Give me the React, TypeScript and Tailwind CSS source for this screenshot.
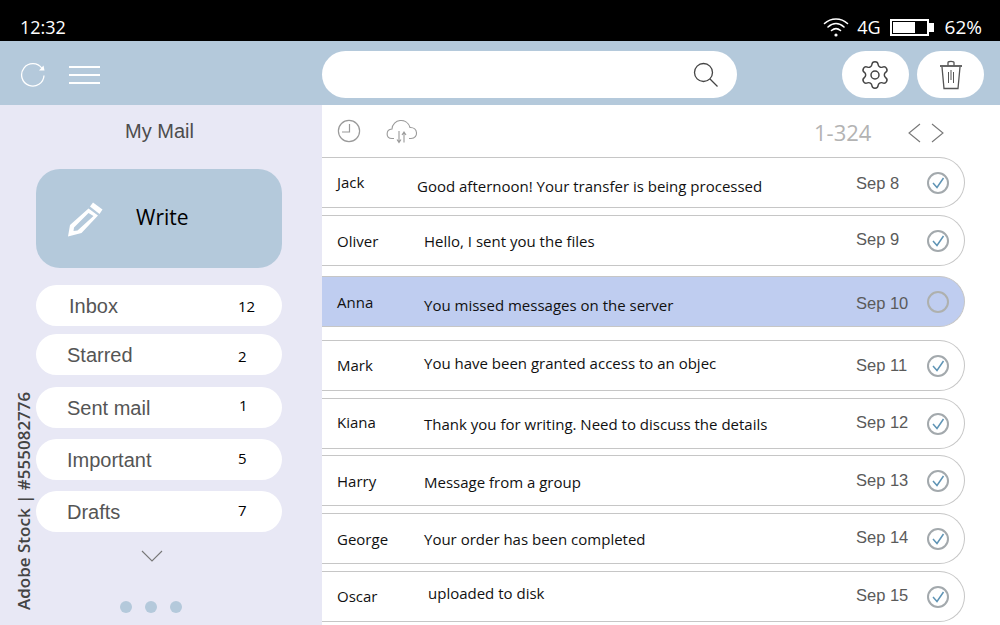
import { Settings } from "lucide-react";

const folders = [
  { name: "Inbox", count: "12", box: "mt-[17px]", label: "ml-[33px] w-[169px]", num: "mt-[2px]" },
  { name: "Starred", count: "2", box: "mt-[8px]", label: "ml-[31px] w-[171px]", num: "mt-[4px]" },
  { name: "Sent mail", count: "1", box: "mt-[12px]", label: "ml-[31px] w-[172px]", num: "mb-[4px]" },
  { name: "Important", count: "5", box: "mt-[11px]", label: "ml-[31px] w-[171px]", num: "mb-[2px]" },
  { name: "Drafts", count: "7", box: "mt-[11px]", label: "ml-[31px] w-[171px]", num: "mb-[2px]" },
];

const mails = [
  { name: "Jack", subject: "Good afternoon! Your transfer is being processed", date: "Sep 8", box: "mt-0", nameCls: "", subCls: "ml-[80px] mt-[8px]", dateCls: "mt-[2px]" },
  { name: "Oliver", subject: "Hello, I sent you the files", date: "Sep 9", box: "mt-[7px]", nameCls: "mt-[2px]", subCls: "ml-[87px] mt-[2px]", dateCls: "mb-[2px]" },
  { name: "Anna", subject: "You missed messages on the server", date: "Sep 10", box: "mt-[10px]", nameCls: "mt-[1px]", subCls: "ml-[87px] mt-[7px]", dateCls: "mt-[3px]", active: true },
  { name: "Mark", subject: "You have been granted access to an objec", date: "Sep 11", box: "mt-[13px]", nameCls: "", subCls: "ml-[87px] mb-[4px]", dateCls: "" },
  { name: "Kiana", subject: "Thank you for writing. Need to discuss the details", date: "Sep 12", box: "mt-[7px]", nameCls: "mb-[2px]", subCls: "ml-[87px] mt-[2px]", dateCls: "mb-[2px]" },
  { name: "Harry", subject: "Message from a group", date: "Sep 13", box: "mt-[6px]", nameCls: "mt-[1px]", subCls: "ml-[87px] mt-[3px]", dateCls: "mb-[1px]" },
  { name: "George", subject: "Your order has been completed", date: "Sep 14", box: "mt-[7px]", nameCls: "mt-[1px]", subCls: "ml-[87px] mt-[1px]", dateCls: "mb-[3px]" },
  { name: "Oscar", subject: "uploaded to disk", date: "Sep 15", box: "mt-[7px]", nameCls: "", subCls: "ml-[91px] mb-[7px]", dateCls: "mb-[3px]" },
];

function Wifi() {
  return (
    <svg width="26" height="22" viewBox="0 0 26 22" fill="none" stroke="white" strokeWidth="1.6" strokeLinecap="round">
      <path d="M1.5 7.5C8 1.5 18 1.5 24.5 7.5" />
      <path d="M5 11C10 6.5 16 6.5 21 11" />
      <path d="M8.5 14.5C11.5 12 14.5 12 17.5 14.5" />
      <circle cx="13" cy="19" r="1.6" fill="white" stroke="none" />
    </svg>
  );
}

function Battery() {
  return (
    <div className="flex items-center">
      <div className="h-[17px] w-[39px] border-2 border-white p-[1px]">
        <div className="h-full w-[22px] bg-white" />
      </div>
      <div className="h-[9px] w-[5px] bg-white" />
    </div>
  );
}

function Refresh() {
  return (
    <svg width="26" height="26" viewBox="0 0 26 26" fill="none" stroke="white" strokeWidth="1.3">
      <path d="M22 6.5A11.2 11.2 0 1 0 24 13.5" />
      <path d="M19 8.5L24.5 8.5L23.5 3.5Z" fill="white" stroke="none" />
    </svg>
  );
}

function Pencil() {
  return (
    <svg width="36" height="36" viewBox="0 0 36 36" fill="white">
      <path d="M26 1.5L35.5 8.5L32.5 13L23 5.5Z" />
      <path fillRule="evenodd" d="M21.5 7.5L31 14.5L14.5 32L1 35.5L3 24ZM21.5 12L7 26.5L6.5 30L10.5 29.5L26.5 15Z" />
      <path d="M21.8 13.5L24.8 15.8L11.5 27.5L9 25.5Z" fill="#b4c9db" />
    </svg>
  );
}

function Trash() {
  return (
    <svg width="24" height="32" viewBox="0 0 24 32" fill="none" stroke="#555" strokeWidth="1.3">
      <path d="M1 7H23" strokeWidth="1.8" />
      <path d="M9 6.5V3.5C9 2 15 2 15 3.5V6.5" />
      <path d="M3 8L5 29.5H19L21 8" />
      <path d="M9.5 13V24M12 11V21M14.5 13V24" strokeWidth="1" />
    </svg>
  );
}

function Clock() {
  return (
    <svg width="24" height="24" viewBox="0 0 24 24" fill="none" stroke="#9a9a9a" strokeWidth="1.2">
      <circle cx="12" cy="12" r="10.6" />
      <path d="M12.5 5V13H5" />
    </svg>
  );
}

function Cloud() {
  return (
    <svg width="32" height="26" viewBox="0 0 32 26" fill="none" stroke="#9a9a9a" strokeWidth="1.1">
      <path d="M8 20.5H6C-0.5 20.5 -0.5 11.5 6 11C6.5 1 21 -1 24 9.5C32 9 33 20.5 25 20.5H23" />
      <path d="M13 13V24M11 21.5L13 24.5L15 21.5M18 24.5V14M16 17L18 14L20 17" />
    </svg>
  );
}

function Chevron({ d, w = 14, h = 20 }: { d: string; w?: number; h?: number }) {
  return (
    <svg width={w} height={h} viewBox={`0 0 ${w} ${h}`} fill="none" stroke="#777" strokeWidth="1.1">
      <path d={d} />
    </svg>
  );
}

function CheckMark({ active }: { active?: boolean }) {
  if (active) {
    return <div className="h-[22px] w-[22px] rounded-full border-2 border-[#aeb0ad]" />;
  }
  return (
    <div className="flex h-[22px] w-[22px] items-center justify-center rounded-full border-2 border-[#a3a9ad]">
      <svg width="14" height="12" viewBox="0 0 14 12" fill="none" stroke="#5f94b5" strokeWidth="1.5">
        <path d="M2 6L6 10.5L12.5 1" />
      </svg>
    </div>
  );
}

export default function App() {
  return (
    <div className="relative flex h-[625px] w-[1000px] flex-col overflow-hidden bg-white font-['Open_Sans',sans-serif]">
      <div className="flex h-[41px] items-end justify-between bg-black pb-[1px] pl-5 pr-[18px] text-white">
        <span className="text-[18px] leading-[26px]">12:32</span>
        <div className="flex items-center">
          <Wifi />
          <span className="ml-[8px] text-[18px] leading-[26px]">4G</span>
          <div className="ml-[9px]">
            <Battery />
          </div>
          <span className="ml-[11px] text-[19px] leading-[26px]">62%</span>
        </div>
      </div>

      <div className="flex h-16 items-center bg-[#b4c9db] pl-[20px] pt-[3px]">
        <Refresh />
        <div className="ml-[23px] flex w-[31px] flex-col gap-[6px]">
          <div className="h-[2px] bg-white" />
          <div className="h-[2px] bg-white" />
          <div className="h-[2px] bg-white" />
        </div>
        <div className="ml-[222px] flex h-[47px] w-[415px] items-center justify-end rounded-full bg-white pr-[18px]">
          <svg width="26" height="26" viewBox="0 0 26 26" fill="none" stroke="#444" strokeWidth="1.3">
            <circle cx="10.5" cy="10.5" r="9" />
            <path d="M17 17L24.5 24.5" />
          </svg>
        </div>
        <div className="ml-[105px] flex h-[47px] w-[67px] items-center justify-center rounded-full bg-white pr-[2px]">
          <Settings size={32} strokeWidth={1.1} color="#444" />
        </div>
        <div className="ml-2 flex h-[47px] w-[67px] items-center justify-center rounded-full bg-white">
          <Trash />
        </div>
      </div>

      <div className="flex min-h-0 flex-1">
        <aside className="flex w-[322px] flex-col items-start bg-[#e8e8f5] pl-9">
          <h1 className="ml-[89px] mt-[14px] font-['Liberation_Sans',sans-serif] text-[20px] leading-6 text-[#4d4d4d]">My Mail</h1>
          <div className="mt-[26px] flex h-[99px] w-[246px] items-center rounded-[24px] bg-[#b4c9db] pl-[31px]">
            <Pencil />
            <span className="mb-[3px] ml-[33px] text-[21px] leading-7 text-black">Write</span>
          </div>
          {folders.map((f) => (
            <div key={f.name} className={`${f.box} flex h-[41px] w-[246px] items-center rounded-full bg-white`}>
              <span className={`${f.label} whitespace-nowrap font-['Liberation_Sans',sans-serif] text-[20px] text-[#555]`}>{f.name}</span>
              <span className={`${f.num} text-[15px] text-black`}>{f.count}</span>
            </div>
          ))}
          <div className="ml-[105px] mt-[18px] flex">
            <Chevron d="M1 1L11 11L21 1" w={22} h={12} />
          </div>
          <div className="ml-[84px] mt-[39px] flex gap-[13px]">
            <div className="h-3 w-3 rounded-full bg-[#b4c9db]" />
            <div className="h-3 w-3 rounded-full bg-[#b4c9db]" />
            <div className="h-3 w-3 rounded-full bg-[#b4c9db]" />
          </div>
        </aside>

        <main className="min-w-0 flex-1">
          <div className="flex h-[52px] items-center pl-[15px]">
            <Clock />
            <div className="ml-[25px]">
              <Cloud />
            </div>
            <span className="ml-[396px] mt-[2px] text-[22px] text-[#b3b3b3]">1-324</span>
            <div className="ml-[36px] mt-[4px] flex gap-[10px]">
              <Chevron d="M13 1L2 10L13 19" />
              <Chevron d="M1 1L12 10L1 19" />
            </div>
          </div>

          {mails.map((m) => (
            <div
              key={m.name}
              className={`${m.box} flex h-[51px] w-[643px] items-center rounded-r-[26px] border border-l-0 border-[#c6c6c6] pl-[15px] ${m.active ? "bg-[#bfcdf0]" : "bg-white"}`}
            >
              <span className={`${m.nameCls} w-0 whitespace-nowrap text-[15px] text-[#111]`}>{m.name}</span>
              <span className={`${m.subCls} min-w-0 flex-1 whitespace-nowrap text-[15px] text-[#111]`}>{m.subject}</span>
              <span className={`${m.dateCls} w-[71px] shrink-0 font-['Liberation_Sans',sans-serif] text-[16.5px] text-[#5a5a5a]`}>{m.date}</span>
              <div className="mr-[15px]">
                <CheckMark active={m.active} />
              </div>
            </div>
          ))}
        </main>
      </div>

      <span className="absolute bottom-[15px] left-[32px] origin-bottom-left -rotate-90 whitespace-nowrap text-[17px] font-semibold leading-none text-[#444]">
        Adobe Stock | #555082776
      </span>
    </div>
  );
}
